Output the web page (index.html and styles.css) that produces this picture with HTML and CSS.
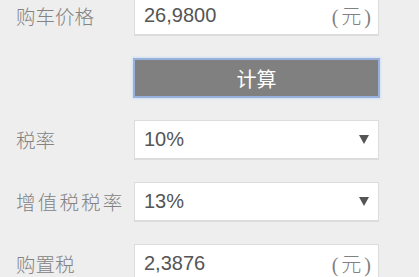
FILE: index.html
```html
<!DOCTYPE html>
<html lang="zh-CN">
<head>
<meta charset="utf-8">
<link rel="stylesheet" href="styles.css">
</head>
<body>
<div class="form">
  <div class="row">
    <div class="label">购车价格</div>
    <div class="field">
      <span class="value">26,9800</span>
      <span class="unit">(元)</span>
    </div>
  </div>
  <div class="row">
    <div class="label"></div>
    <div class="btn">计算</div>
  </div>
  <div class="row">
    <div class="label">税率</div>
    <div class="field">
      <span class="value">10%</span>
      <span class="arrow"></span>
    </div>
  </div>
  <div class="row">
    <div class="label wide">增值税税率</div>
    <div class="field">
      <span class="value">13%</span>
      <span class="arrow"></span>
    </div>
  </div>
  <div class="row">
    <div class="label">购置税</div>
    <div class="field">
      <span class="value">2,3876</span>
      <span class="unit">(元)</span>
    </div>
  </div>
</div>
</body>
</html>
```
FILE: styles.css
```css
html, body {
  margin: 0;
  padding: 0;
  background: #eeeeee;
}
body {
  width: 419px;
  height: 277px;
  overflow: hidden;
  font-family: "Liberation Sans", Arial, "Noto Sans CJK SC", sans-serif;
}
.form {
  display: flex;
  flex-direction: column;
  gap: 22px;
  margin-top: -4px;
  padding-left: 16px;
}
.row {
  display: flex;
  align-items: center;
  height: 40px;
}
.label {
  width: 118px;
  flex: none;
  font-family: "Noto Sans CJK SC", sans-serif;
  font-size: 19.5px;
  font-weight: 300;
  color: #838383;
  line-height: 40px;
}
.label.wide {
  letter-spacing: 2.2px;
}
.field {
  width: 245px;
  height: 40px;
  box-sizing: border-box;
  background: #ffffff;
  border: 1px solid #dcdcdc;
  border-bottom-width: 2px;
  display: flex;
  align-items: center;
  justify-content: space-between;
  padding: 0 8px 0 9px;
}
.value {
  font-size: 20px;
  color: #555555;
}
.unit {
  font-family: "Liberation Serif", "Noto Sans CJK SC", serif;
  font-size: 20px;
  font-weight: 300;
  letter-spacing: 3px;
  color: #808080;
  margin-right: -4px;
}
.arrow {
  width: 0;
  height: 0;
  border-left: 5px solid transparent;
  border-right: 5px solid transparent;
  border-top: 9px solid #555555;
  margin-right: 1px;
}
.btn {
  width: 247px;
  height: 40px;
  margin-left: -1px;
  box-sizing: border-box;
  background: #808080;
  border: 2px solid #98b0dc;
  box-shadow: 0 0 2px 1px #d4e0f4;
  display: flex;
  align-items: center;
  justify-content: center;
  font-family: "Noto Sans CJK SC", sans-serif;
  font-size: 20px;
  color: #ffffff;
}
```
